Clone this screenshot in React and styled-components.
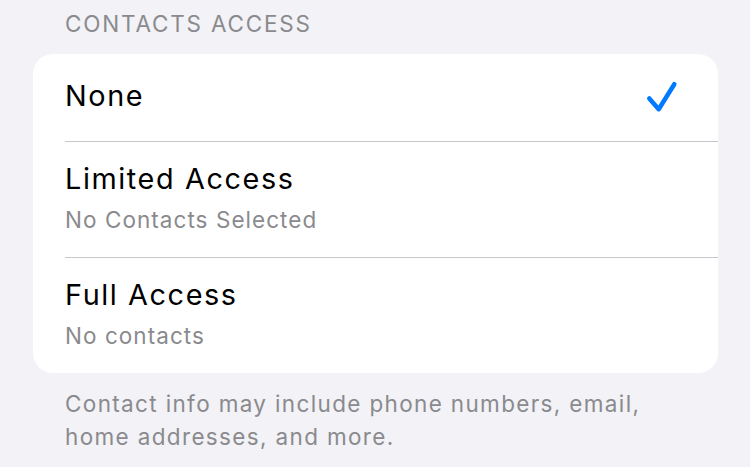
import React from "react";
import styled, { createGlobalStyle } from "styled-components";

const Global = createGlobalStyle`
  html, body {
    margin: 0;
    padding: 0;
    background: #f2f2f7;
  }
  body {
    font-family: Inter, "Noto Sans", "Liberation Sans", sans-serif;
    -webkit-font-smoothing: antialiased;
  }
`;

const Page = styled.div`
  width: 750px;
  height: 467px;
  box-sizing: border-box;
  padding: 10px 32px 0 33px;
  background: #f2f2f7;
  overflow: hidden;
`;

const SectionHeader = styled.div`
  padding-left: 32px;
  font-size: 22.5px;
  line-height: 28px;
  color: #8a8a8e;
  text-transform: uppercase;
  letter-spacing: 1.8px;
  margin-bottom: 15.5px;
`;

const Card = styled.div`
  background: #ffffff;
  border-radius: 20px;
  overflow: hidden;
`;

const Row = styled.div`
  display: flex;
  align-items: center;
  padding: ${(p) => (p.$sub ? "20px 40px 23px 32px" : "25px 40px 28px 32px")};
`;

const Separator = styled.div`
  height: 1px;
  margin-left: 32px;
  background: #c8c8cc;
`;

const Texts = styled.div`
  flex: 1;
  display: flex;
  flex-direction: column;
`;

const Title = styled.div`
  font-size: 28.8px;
  line-height: 34px;
  letter-spacing: 1.6px;
  color: #000000;
`;

const Subtitle = styled.div`
  margin-top: 10px;
  font-size: 22.5px;
  line-height: 28px;
  letter-spacing: 1.05px;
  color: #8a8a8e;
`;

const Check = styled.svg`
  width: 34px;
  height: 34px;
  flex: none;
`;

const Footer = styled.div`
  margin-top: 14px;
  padding-left: 32px;
  font-size: 22.5px;
  line-height: 33px;
  letter-spacing: 1.35px;
  color: #8a8a8e;
`;

const options = [
  { title: "None", selected: true },
  { title: "Limited Access", sub: "No Contacts Selected" },
  { title: "Full Access", sub: "No contacts" },
];

export default function App() {
  return (
    <>
      <Global />
      <Page>
        <SectionHeader>Contacts Access</SectionHeader>
        <Card>
          {options.map((o, i) => (
            <React.Fragment key={o.title}>
              {i > 0 && <Separator />}
              <Row $sub={!!o.sub}>
                <Texts>
                  <Title>{o.title}</Title>
                  {o.sub && <Subtitle>{o.sub}</Subtitle>}
                </Texts>
                {o.selected && (
                  <Check viewBox="0 0 34 34">
                    <path
                      d="M5.3 19.5 L14.7 30.2 L30.3 5.2"
                      fill="none"
                      stroke="#007aff"
                      strokeWidth="4.5"
                      strokeLinecap="round"
                      strokeLinejoin="round"
                    />
                  </Check>
                )}
              </Row>
            </React.Fragment>
          ))}
        </Card>
        <Footer>
          Contact info may include phone numbers, email,
          <br />
          home addresses, and more.
        </Footer>
      </Page>
    </>
  );
}
